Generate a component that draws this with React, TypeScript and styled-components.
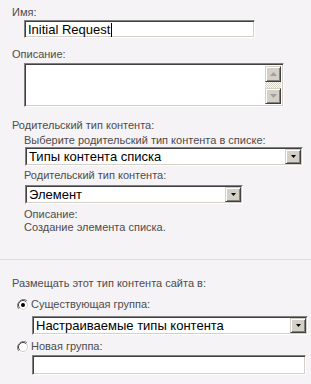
import React from "react";
import styled, { createGlobalStyle, css } from "styled-components";

const GlobalStyle = createGlobalStyle`
  html, body {
    margin: 0;
    padding: 0;
    background: #f6f3f6;
  }
  body {
    font-family: "Liberation Sans", Arial, sans-serif;
  }
`;

const sunken = css`
  box-sizing: border-box;
  background: #fff;
  border: 1px solid;
  border-color: #808080 #fff #fff #808080;
  box-shadow: inset 1px 1px 0 #404040, inset -1px -1px 0 #d4d0c8;
`;

const raised = css`
  box-sizing: border-box;
  background: #d4d0c8;
  border: 1px solid;
  border-color: #d4d0c8 #404040 #404040 #d4d0c8;
  box-shadow: inset 1px 1px 0 #fff, inset -1px -1px 0 #808080;
`;

const Page = styled.div`
  width: 311px;
  height: 384px;
  box-sizing: border-box;
  display: flex;
  flex-direction: column;
`;

const Section = styled.div<{ $pt: number }>`
  padding: ${(p) => p.$pt}px 0 0 12px;
  display: flex;
  flex-direction: column;
`;

const TopSection = styled(Section)`
  padding-bottom: 25px;
  border-bottom: 1px solid #dcdcdc;
`;

const Label = styled.div<{ $mt?: number; $ml?: number }>`
  font-size: 11px;
  line-height: 13px;
  color: #4c4c4c;
  margin-top: ${(p) => p.$mt ?? 0}px;
  margin-left: ${(p) => p.$ml ?? 0}px;
  white-space: nowrap;
`;

const TextBox = styled.div<{ $w: number; $h: number; $mt?: number; $ml?: number }>`
  ${sunken};
  width: ${(p) => p.$w}px;
  height: ${(p) => p.$h}px;
  margin-top: ${(p) => p.$mt ?? 0}px;
  margin-left: ${(p) => p.$ml ?? 0}px;
  padding: 2px 3px 0;
  font-size: 13px;
  line-height: 14px;
  color: #000;
  display: flex;
  align-items: flex-start;
`;

const Caret = styled.span`
  display: inline-block;
  width: 1px;
  height: 14px;
  background: #000;
  margin-left: 1px;
`;

const TextArea = styled.div<{ $w: number; $h: number; $mt?: number; $ml?: number }>`
  ${sunken};
  width: ${(p) => p.$w}px;
  height: ${(p) => p.$h}px;
  margin-top: ${(p) => p.$mt ?? 0}px;
  margin-left: ${(p) => p.$ml ?? 0}px;
  padding: 2px;
  display: flex;
  justify-content: flex-end;
`;

const ScrollBar = styled.div`
  width: 16px;
  height: 100%;
  display: flex;
  flex-direction: column;
  background-color: #fff;
  background-image: repeating-conic-gradient(#d4d0c8 0 25%, #fff 0 50%);
  background-size: 2px 2px;
`;

const ArrowButton = styled.div`
  ${raised};
  width: 16px;
  height: 16px;
  display: flex;
  align-items: center;
  justify-content: center;
`;

const Track = styled.div`
  flex: 1;
`;

const Select = styled.div<{ $w: number; $mt?: number; $ml?: number }>`
  box-sizing: border-box;
  width: ${(p) => p.$w}px;
  height: 19px;
  margin-top: ${(p) => p.$mt ?? 0}px;
  margin-left: ${(p) => p.$ml ?? 0}px;
  border: 1px solid;
  border-color: #808080 #fff #fff #808080;
  display: flex;
`;

const SelectInner = styled.div`
  flex: 1;
  background: #fff;
  border: 1px solid;
  border-color: #404040 #d4d0c8 #d4d0c8 #404040;
  display: flex;
  align-items: stretch;
`;

const SelectText = styled.div`
  flex: 1;
  font-size: 13px;
  line-height: 15px;
  color: #000;
  padding-left: 2px;
  white-space: nowrap;
`;

const DropButton = styled.div`
  ${raised};
  width: 16px;
  display: flex;
  align-items: center;
  justify-content: center;
`;

const RadioRow = styled.div<{ $mt?: number }>`
  display: flex;
  align-items: center;
  gap: 2px;
  margin-top: ${(p) => p.$mt ?? 0}px;
  margin-left: 5px;
`;

const Arrow = ({ down, color }: { down?: boolean; color: string }) => (
  <svg width="7" height="4" viewBox="0 0 7 4">
    <path d={down ? "M0 0H7L3.5 4Z" : "M0 4H7L3.5 0Z"} fill={color} />
  </svg>
);

const DropArrow = () => (
  <svg width="5" height="3" viewBox="0 0 5 3">
    <path d="M0 0H5L2.5 3Z" fill="#000" />
  </svg>
);

const Radio = ({ checked }: { checked?: boolean }) => (
  <svg width="12" height="12" viewBox="0 0 12 12">
    <path d="M10.2 1.8A6 6 0 0 0 1.8 10.2" stroke="#808080" fill="none" />
    <path d="M1.8 10.2A6 6 0 0 0 10.2 1.8" stroke="#fff" fill="none" />
    <circle cx="6" cy="6" r="4.6" fill="#fff" />
    <path d="M9.2 2.8A4.5 4.5 0 0 0 2.8 9.2" stroke="#404040" fill="none" />
    <path d="M2.8 9.2A4.5 4.5 0 0 0 9.2 2.8" stroke="#d4d0c8" fill="none" />
    {checked && <circle cx="6" cy="6" r="2" fill="#000" />}
  </svg>
);

const Dropdown = ({ w, text, mt, ml }: { w: number; text: string; mt?: number; ml?: number }) => (
  <Select $w={w} $mt={mt} $ml={ml}>
    <SelectInner>
      <SelectText>{text}</SelectText>
      <DropButton>
        <DropArrow />
      </DropButton>
    </SelectInner>
  </Select>
);

export default function App() {
  return (
    <>
      <GlobalStyle />
      <Page>
        <TopSection $pt={6}>
          <Label>Имя:</Label>
          <TextBox $w={231} $h={18} $mt={1} $ml={12}>
            Initial Request
            <Caret />
          </TextBox>

          <Label $mt={10}>Описание:</Label>
          <TextArea $w={260} $h={44} $mt={2} $ml={12}>
            <ScrollBar>
              <ArrowButton>
                <Arrow color="#a0a0a0" />
              </ArrowButton>
              <Track />
              <ArrowButton>
                <Arrow down color="#a0a0a0" />
              </ArrowButton>
            </ScrollBar>
          </TextArea>

          <Label $mt={12}>Родительский тип контента:</Label>
          <Label $mt={2} $ml={12}>
            Выберите родительский тип контента в списке:
          </Label>
          <Dropdown w={278} ml={13} text="Типы контента списка" />
          <Label $mt={3} $ml={12}>
            Родительский тип контента:
          </Label>
          <Dropdown w={218} mt={3} ml={13} text="Элемент" />
          <Label $mt={4} $ml={12}>
            Описание:
          </Label>
          <Label $ml={12}>Создание элемента списка.</Label>
        </TopSection>

        <Section $pt={17}>
          <Label>Размещать этот тип контента сайта в:</Label>
          <RadioRow $mt={8}>
            <Radio checked />
            <Label>Существующая группа:</Label>
          </RadioRow>
          <Dropdown w={276} mt={5} ml={20} text="Настраиваемые типы контента" />
          <RadioRow $mt={5}>
            <Radio />
            <Label>Новая группа:</Label>
          </RadioRow>
          <TextBox $w={274} $h={20} $mt={2} $ml={20} />
        </Section>
      </Page>
    </>
  );
}
